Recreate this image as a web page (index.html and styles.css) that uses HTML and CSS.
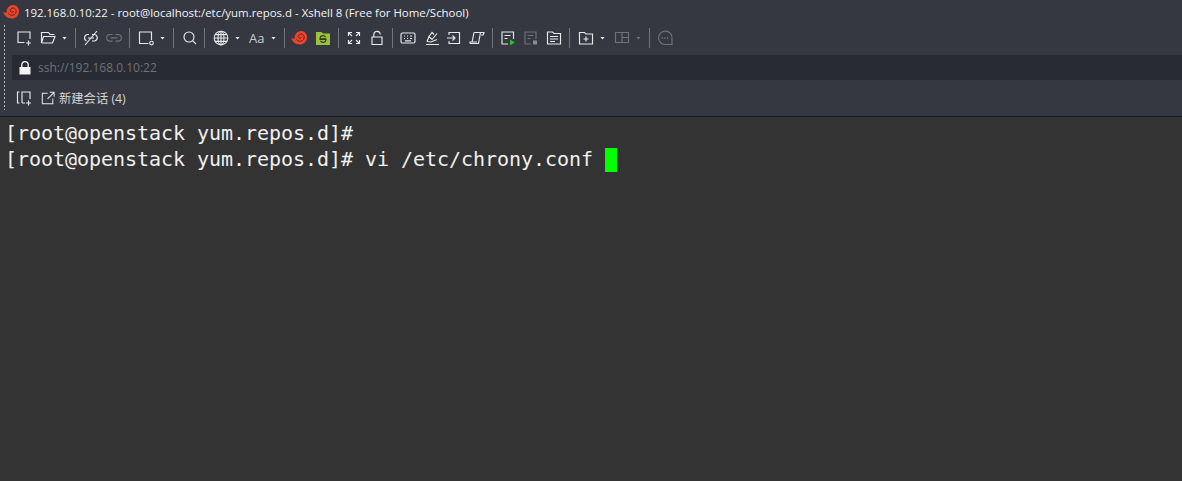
FILE: index.html
```html
<!DOCTYPE html>
<html lang="zh">
<head>
<meta charset="utf-8">
<title>Xshell 8</title>
<link rel="stylesheet" href="styles.css">
</head>
<body>
<svg class="defs" width="0" height="0" aria-hidden="true">
  <symbol id="snail" viewBox="0 0 16 16">
    <path fill="#e8452c" d="M0 7.800c1.300.8 2.500 1 3.700.7C3.400 4.300 6.300 1 10 1c3.400 0 6 2.700 6 6.200 0 4.200-3.100 7.300-7.300 7.300-4.200 0-7.300-2.400-8.700-6.700z"/>
    <path fill="none" stroke="#7a2018" stroke-width="1" stroke-linecap="round" d="M5.500 9.500c1.200 2 4 2.400 5.900 1.100 1.900-1.300 2.300-3.700 1.100-5.300-1.100-1.500-3.300-1.700-4.500-.5-1 1-1 2.500 0 3.200.9.600 2 .3 2.300-.6"/>
  </symbol>
</svg>

<header class="titlebar">
  <svg class="app-logo" width="16" height="16"><use href="#snail"/></svg>
  <span class="title-text">192.168.0.10:22 - root@localhost:/etc/yum.repos.d - Xshell 8 (Free for Home/School)</span>
</header>

<div class="chrome">
  <div class="grip"></div>
  <div class="bars">
    <div class="toolbar">
      <svg class="ic" viewBox="0 0 16 16"><path d="M8.500 12.500H2V2h12v7M12.500 10.500v5M10 13h5"/></svg>
      <svg class="ic m8" viewBox="0 0 16 16"><path d="M1.500 13V2.500h7l1.500 2h4.500M1.500 13h11l2.500-6.500H3.500L1.500 13"/></svg>
      <i class="caret m6"></i>
      <i class="sep m8"></i>
      <svg class="ic m7" viewBox="0 0 16 16"><path d="M6 4.500H4.500a3.300 3.300 0 0 0-1 6.300M9 4.500h2.500a3.300 3.300 0 0 1 0 6.500H9M5 8h6M2 15L14 1"/></svg>
      <svg class="ic m7 dim" viewBox="0 0 16 16"><path d="M6.500 4.500H4a3.300 3.300 0 0 0 0 6.600h2.500M9.500 4.500H12a3.300 3.300 0 0 1 0 6.600H9.500M4.500 7.800h7"/></svg>
      <i class="sep m7"></i>
      <svg class="ic m8" viewBox="0 0 16 16"><path d="M10.500 13.500H1.500V2h12v8"/><circle cx="13.500" cy="13" r="1.800"/></svg>
      <i class="caret m6"></i>
      <i class="sep m8"></i>
      <svg class="ic m7" viewBox="0 0 16 16"><circle cx="8" cy="7" r="5"/><path d="M11.600 10.600L15 14"/></svg>
      <i class="sep m7"></i>
      <svg class="ic m8" viewBox="0 0 16 16"><circle cx="8" cy="8" r="6.800"/><ellipse cx="8" cy="8" rx="3" ry="6.800"/><path d="M8 1.200v13.600M1.200 8h13.600M2.200 4.600h11.600M2.200 11.400h11.600"/></svg>
      <i class="caret m6"></i>
      <span class="aa m9">Aa</span>
      <i class="caret m6"></i>
      <i class="sep m8"></i>
      <svg class="ic m6 solid" width="16" height="16"><use href="#snail"/></svg>
      <svg class="ic m8 solid" viewBox="0 0 16 16"><path fill="#9cc23a" d="M1 2h5.500L8 3.500h7V15H1z"/><path fill="none" stroke="#2e3a20" stroke-width="1.200" d="M5 8.200a3 3 0 0 1 5.600-1M11 9.800a3 3 0 0 1-5.600 1M4.500 8.800h7M4.500 9.300h7"/></svg>
      <i class="sep m7"></i>
      <svg class="ic m7" viewBox="0 0 16 16"><path d="M2.500 6V2.500H6M2.500 2.500L6 6M13.500 6V2.500H10M13.500 2.500L10 6M2.500 10v3.500H6M2.500 13.500L6 10M13.500 10v3.500H10M13.500 13.500L10 10"/></svg>
      <svg class="ic m7" viewBox="0 0 16 16"><path d="M3 7h10v7.500H3zM4.800 7V4.500a3.200 3.200 0 0 1 6.400 0"/></svg>
      <i class="sep m7"></i>
      <svg class="ic m7" viewBox="0 0 16 16"><rect x="1" y="3" width="14" height="10" rx="1.500"/><path d="M4 6h1M7 6h1M10 6h2M4 8.500h1M7 8.500h1M10 8.500h2M5 10.800h6"/></svg>
      <svg class="ic m8" viewBox="0 0 16 16"><path d="M2 14.500h13M3 11.500l2-5 3 3 5-6M5 6.500l3-4 2 2M3 11.500l4 .5 6-2.500"/></svg>
      <svg class="ic m6" viewBox="0 0 16 16"><path d="M3 5V2.500h10.500v11H3V11M1 8h8M6.500 5.500L9 8l-2.500 2.500"/></svg>
      <svg class="ic m7" viewBox="0 0 16 16"><path d="M5 2.500h10l-.8 2.500h-2M5 2.500L3 12.500M11.500 2.500L9.500 13.500H2c-1 0-1.200-1-1-1.500h7"/></svg>
      <i class="sep m7"></i>
      <svg class="ic m7" viewBox="0 0 16 16"><path d="M8 14H2V2h11.500v7M4.500 5.500h6M4.500 8.500h3"/><path class="play" d="M10 9.500l5 3-5 3z"/></svg>
      <svg class="ic m7 dim" viewBox="0 0 16 16"><path d="M8 14H2V2h11v7M4.500 5.500h6M4.500 8.500h3"/><rect class="square" x="10" y="10.500" width="4" height="4"/></svg>
      <svg class="ic m7" viewBox="0 0 16 16"><path d="M1.500 2h5l1.500 1.500h6.500V14h-13zM4 6.500h8M4 9h8M4 11.500h5"/></svg>
      <i class="sep m7"></i>
      <svg class="ic m8" viewBox="0 0 16 16"><path d="M1.500 2.500h5l1.500 1.500h6.500v10h-13zM8 6.500v5M5.500 9h5"/></svg>
      <i class="caret m6"></i>
      <svg class="ic m9 dim" viewBox="0 0 16 16"><path d="M1.500 2.500h13v10h-13zM8 2.500v10M8 7.500h6.500"/></svg>
      <i class="caret m6 dimcaret"></i>
      <i class="sep m8"></i>
      <svg class="ic m7 dim" viewBox="0 0 16 16"><path d="M15 14.500h-7a6.700 6.700 0 1 1 7-6.500z"/><path class="dots" d="M4.800 8h1.200M7.400 8h1.200M10 8h1.200"/></svg>
    </div>
    <div class="addressbar">
      <svg class="lock" viewBox="0 0 12 14"><path class="lock-body" d="M.5 6h11v7.500H.5z"/><path class="lock-arc" d="M2.800 6V3.800a3.200 3.200 0 0 1 6.400 0V6"/></svg>
      <span class="address">ssh://192.168.0.10:22</span>
    </div>
    <div class="sessionbar">
      <svg class="ic" viewBox="0 0 16 16"><path d="M3.500 2H1.500v11h2M6 13V2h8v7M6 13h3M12.500 10.500v5M10 13h5"/></svg>
      <svg class="ic ext" viewBox="0 0 16 16"><path d="M7.500 2.500h-6v12h12V8.500M10 1.500h5v5M15 1.500L7.500 9"/></svg>
      <span class="session-name">新建会话 (4)</span>
    </div>
  </div>
</div>

<main class="terminal">
  <div class="line">[root@openstack yum.repos.d]#</div>
  <div class="line">[root@openstack yum.repos.d]# vi /etc/chrony.conf <span class="cursor"></span></div>
</main>
</body>
</html>
```
FILE: styles.css
```css
* { box-sizing: border-box; }
html, body { margin: 0; height: 100%; }
body {
  width: 1182px;
  height: 481px;
  overflow: hidden;
  background: #333333;
  display: flex;
  flex-direction: column;
  font-family: "Open Sans", "Noto Sans CJK SC", sans-serif;
}
.defs { position: absolute; }
.titlebar {
  height: 24px;
  background: #353841;
  display: flex;
  align-items: center;
  padding-left: 3px;
  flex: none;
}
.title-text {
  margin-left: 5px;
  font-size: 11.430px;
  color: #f4f4f4;
  white-space: nowrap;
}
.chrome {
  display: flex;
  flex: none;
  height: 93px;
  background: #353841;
  border-bottom: 1px solid #0f1a35;
}
.grip {
  width: 12px;
  margin-bottom: 6px;
  background-image: radial-gradient(#b9bbbf 0.9px, transparent 1px);
  background-size: 3px 4px;
  background-repeat: repeat-y;
  background-position: 3px 0;
}
.bars { flex: 1; display: flex; flex-direction: column; }
.toolbar {
  height: 31px;
  display: flex;
  align-items: center;
  padding: 0 0 3px 4px;
}
.ic {
  width: 16px;
  height: 16px;
  flex: none;
  fill: none;
  stroke: #e8e8e8;
  stroke-width: 1.150;
}
.ic.dim { stroke: #6f7277; }
.ic.solid { stroke: none; }
.play { fill: #22c02c; stroke: none; }
.square { fill: #8a8c90; stroke: none; }
.dots { stroke-width: 1.300; }
.m6 { margin-left: 6px; }
.m7 { margin-left: 7px; }
.m8 { margin-left: 8px; }
.m9 { margin-left: 9px; }
.caret {
  width: 5px;
  height: 3px;
  flex: none;
  background: #e8e8e8;
  clip-path: polygon(0 0, 100% 0, 50% 100%);
}
.dimcaret { background: #6f7277; }
.sep {
  width: 1px;
  height: 20px;
  flex: none;
  background: #74767b;
}
.aa {
  width: 16px;
  flex: none;
  font-size: 13px;
  line-height: 16px;
  color: #c9cacd;
  white-space: nowrap;
}
.addressbar {
  height: 25px;
  background: #282b33;
  display: flex;
  align-items: center;
  padding-left: 7px;
}
.lock { width: 12px; height: 14px; flex: none; }
.lock-body { fill: #f2f2f2; }
.lock-arc { fill: none; stroke: #f2f2f2; stroke-width: 1.300; }
.address {
  margin-left: 7px;
  font-size: 12px;
  color: #707278;
  white-space: nowrap;
}
.sessionbar {
  flex: 1;
  display: flex;
  align-items: center;
  padding-left: 4px;
}
.ext { margin-left: 9px; width: 14px; height: 14px; }
.session-name {
  margin-left: 4px;
  font-size: 12.300px;
  color: #d4d5d7;
  white-space: nowrap;
}
.terminal {
  flex: 1;
  padding: 3px 0 0 5px;
  background: #333333;
  color: #f0f0f0;
  font-family: "DejaVu Sans Mono", monospace;
  font-size: 20px;
  letter-spacing: -0.04px;
}
.line {
  height: 26px;
  line-height: 26px;
  white-space: pre;
}
.cursor {
  display: inline-block;
  width: 12px;
  height: 24px;
  background: #00ff00;
  vertical-align: -6px;
}
```
